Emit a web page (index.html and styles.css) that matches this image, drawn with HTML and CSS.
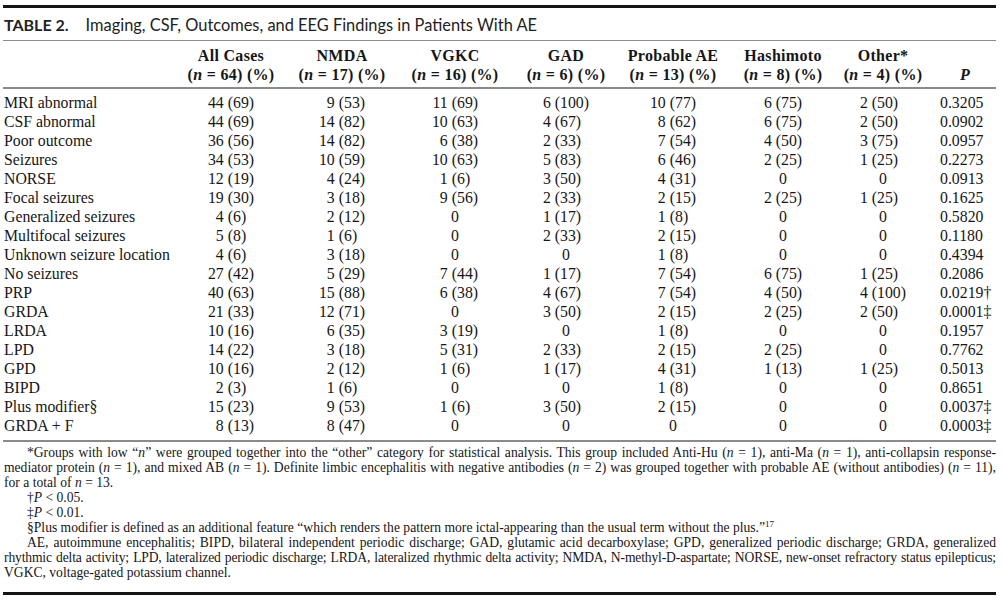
FILE: index.html
```html
<!DOCTYPE html>
<html lang="en">
<head>
<meta charset="utf-8">
<title>Table 2</title>
<link rel="stylesheet" href="styles.css">
</head>
<body>
<div class="sheet">
  <div class="title"><span class="lbl">TABLE 2.</span><span class="cap">Imaging, CSF, Outcomes, and EEG Findings in Patients With AE</span></div>
  <table class="data">
    <colgroup>
      <col class="c-label"><col class="c-all"><col class="c-nmda"><col class="c-vgkc"><col class="c-gad"><col class="c-prob"><col class="c-hash"><col class="c-other"><col class="c-p">
    </colgroup>
    <thead>
      <tr>
        <th></th>
        <th>All Cases<br>(<i>n</i> = 64) (%)</th>
        <th>NMDA<br>(<i>n</i> = 17) (%)</th>
        <th>VGKC<br>(<i>n</i> = 16) (%)</th>
        <th>GAD<br>(<i>n</i> = 6) (%)</th>
        <th>Probable AE<br>(<i>n</i> = 13) (%)</th>
        <th>Hashimoto<br>(<i>n</i> = 8) (%)</th>
        <th>Other*<br>(<i>n</i> = 4) (%)</th>
        <th class="ph"><br><i>P</i></th>
      </tr>
    </thead>
    <tbody>
      <tr><td>MRI abnormal</td><td><span class="n">44</span> <span class="p">(69)</span></td><td><span class="n">9</span> <span class="p">(53)</span></td><td><span class="n">11</span> <span class="p">(69)</span></td><td><span class="n">6</span> <span class="p">(100)</span></td><td><span class="n">10</span> <span class="p">(77)</span></td><td><span class="n">6</span> <span class="p">(75)</span></td><td><span class="n">2</span> <span class="p">(50)</span></td><td>0.3205</td></tr>
      <tr><td>CSF abnormal</td><td><span class="n">44</span> <span class="p">(69)</span></td><td><span class="n">14</span> <span class="p">(82)</span></td><td><span class="n">10</span> <span class="p">(63)</span></td><td><span class="n">4</span> <span class="p">(67)</span></td><td><span class="n">8</span> <span class="p">(62)</span></td><td><span class="n">6</span> <span class="p">(75)</span></td><td><span class="n">2</span> <span class="p">(50)</span></td><td>0.0902</td></tr>
      <tr><td>Poor outcome</td><td><span class="n">36</span> <span class="p">(56)</span></td><td><span class="n">14</span> <span class="p">(82)</span></td><td><span class="n">6</span> <span class="p">(38)</span></td><td><span class="n">2</span> <span class="p">(33)</span></td><td><span class="n">7</span> <span class="p">(54)</span></td><td><span class="n">4</span> <span class="p">(50)</span></td><td><span class="n">3</span> <span class="p">(75)</span></td><td>0.0957</td></tr>
      <tr><td>Seizures</td><td><span class="n">34</span> <span class="p">(53)</span></td><td><span class="n">10</span> <span class="p">(59)</span></td><td><span class="n">10</span> <span class="p">(63)</span></td><td><span class="n">5</span> <span class="p">(83)</span></td><td><span class="n">6</span> <span class="p">(46)</span></td><td><span class="n">2</span> <span class="p">(25)</span></td><td><span class="n">1</span> <span class="p">(25)</span></td><td>0.2273</td></tr>
      <tr><td>NORSE</td><td><span class="n">12</span> <span class="p">(19)</span></td><td><span class="n">4</span> <span class="p">(24)</span></td><td><span class="n">1</span> <span class="p">(6)</span></td><td><span class="n">3</span> <span class="p">(50)</span></td><td><span class="n">4</span> <span class="p">(31)</span></td><td>0</td><td>0</td><td>0.0913</td></tr>
      <tr><td>Focal seizures</td><td><span class="n">19</span> <span class="p">(30)</span></td><td><span class="n">3</span> <span class="p">(18)</span></td><td><span class="n">9</span> <span class="p">(56)</span></td><td><span class="n">2</span> <span class="p">(33)</span></td><td><span class="n">2</span> <span class="p">(15)</span></td><td><span class="n">2</span> <span class="p">(25)</span></td><td><span class="n">1</span> <span class="p">(25)</span></td><td>0.1625</td></tr>
      <tr><td>Generalized seizures</td><td><span class="n">4</span> <span class="p">(6)</span></td><td><span class="n">2</span> <span class="p">(12)</span></td><td>0</td><td><span class="n">1</span> <span class="p">(17)</span></td><td><span class="n">1</span> <span class="p">(8)</span></td><td>0</td><td>0</td><td>0.5820</td></tr>
      <tr><td>Multifocal seizures</td><td><span class="n">5</span> <span class="p">(8)</span></td><td><span class="n">1</span> <span class="p">(6)</span></td><td>0</td><td><span class="n">2</span> <span class="p">(33)</span></td><td><span class="n">2</span> <span class="p">(15)</span></td><td>0</td><td>0</td><td>0.1180</td></tr>
      <tr><td>Unknown seizure location</td><td><span class="n">4</span> <span class="p">(6)</span></td><td><span class="n">3</span> <span class="p">(18)</span></td><td>0</td><td>0</td><td><span class="n">1</span> <span class="p">(8)</span></td><td>0</td><td>0</td><td>0.4394</td></tr>
      <tr><td>No seizures</td><td><span class="n">27</span> <span class="p">(42)</span></td><td><span class="n">5</span> <span class="p">(29)</span></td><td><span class="n">7</span> <span class="p">(44)</span></td><td><span class="n">1</span> <span class="p">(17)</span></td><td><span class="n">7</span> <span class="p">(54)</span></td><td><span class="n">6</span> <span class="p">(75)</span></td><td><span class="n">1</span> <span class="p">(25)</span></td><td>0.2086</td></tr>
      <tr><td>PRP</td><td><span class="n">40</span> <span class="p">(63)</span></td><td><span class="n">15</span> <span class="p">(88)</span></td><td><span class="n">6</span> <span class="p">(38)</span></td><td><span class="n">4</span> <span class="p">(67)</span></td><td><span class="n">7</span> <span class="p">(54)</span></td><td><span class="n">4</span> <span class="p">(50)</span></td><td><span class="n">4</span> <span class="p">(100)</span></td><td>0.0219†</td></tr>
      <tr><td>GRDA</td><td><span class="n">21</span> <span class="p">(33)</span></td><td><span class="n">12</span> <span class="p">(71)</span></td><td>0</td><td><span class="n">3</span> <span class="p">(50)</span></td><td><span class="n">2</span> <span class="p">(15)</span></td><td><span class="n">2</span> <span class="p">(25)</span></td><td><span class="n">2</span> <span class="p">(50)</span></td><td>0.0001‡</td></tr>
      <tr><td>LRDA</td><td><span class="n">10</span> <span class="p">(16)</span></td><td><span class="n">6</span> <span class="p">(35)</span></td><td><span class="n">3</span> <span class="p">(19)</span></td><td>0</td><td><span class="n">1</span> <span class="p">(8)</span></td><td>0</td><td>0</td><td>0.1957</td></tr>
      <tr><td>LPD</td><td><span class="n">14</span> <span class="p">(22)</span></td><td><span class="n">3</span> <span class="p">(18)</span></td><td><span class="n">5</span> <span class="p">(31)</span></td><td><span class="n">2</span> <span class="p">(33)</span></td><td><span class="n">2</span> <span class="p">(15)</span></td><td><span class="n">2</span> <span class="p">(25)</span></td><td>0</td><td>0.7762</td></tr>
      <tr><td>GPD</td><td><span class="n">10</span> <span class="p">(16)</span></td><td><span class="n">2</span> <span class="p">(12)</span></td><td><span class="n">1</span> <span class="p">(6)</span></td><td><span class="n">1</span> <span class="p">(17)</span></td><td><span class="n">4</span> <span class="p">(31)</span></td><td><span class="n">1</span> <span class="p">(13)</span></td><td><span class="n">1</span> <span class="p">(25)</span></td><td>0.5013</td></tr>
      <tr><td>BIPD</td><td><span class="n">2</span> <span class="p">(3)</span></td><td><span class="n">1</span> <span class="p">(6)</span></td><td>0</td><td>0</td><td><span class="n">1</span> <span class="p">(8)</span></td><td>0</td><td>0</td><td>0.8651</td></tr>
      <tr><td>Plus modifier§</td><td><span class="n">15</span> <span class="p">(23)</span></td><td><span class="n">9</span> <span class="p">(53)</span></td><td><span class="n">1</span> <span class="p">(6)</span></td><td><span class="n">3</span> <span class="p">(50)</span></td><td><span class="n">2</span> <span class="p">(15)</span></td><td>0</td><td>0</td><td>0.0037‡</td></tr>
      <tr><td>GRDA + F</td><td><span class="n">8</span> <span class="p">(13)</span></td><td><span class="n">8</span> <span class="p">(47)</span></td><td>0</td><td>0</td><td>0</td><td>0</td><td>0</td><td>0.0003‡</td></tr>
    </tbody>
  </table>
  <div class="notes">
    <p class="para">
      <span class="ln j ind">*Groups with low “<i>n</i>” were grouped together into the “other” category for statistical analysis. This group included Anti-Hu (<i>n</i> = 1), anti-Ma (<i>n</i> = 1), anti-collapsin response-</span>
      <span class="ln j">mediator protein (<i>n</i> = 1), and mixed AB (<i>n</i> = 1). Definite limbic encephalitis with negative antibodies (<i>n</i> = 2) was grouped together with probable AE (without antibodies) (<i>n</i> = 11),</span>
      <span class="ln">for a total of <i>n</i> = 13.</span>
    </p>
    <p class="para"><span class="ln ind">†<i>P</i> &lt; 0.05.</span></p>
    <p class="para"><span class="ln ind">‡<i>P</i> &lt; 0.01.</span></p>
    <p class="para"><span class="ln ind">§Plus modifier is defined as an additional feature “which renders the pattern more ictal-appearing than the usual term without the plus.”<sup>17</sup></span></p>
    <p class="para">
      <span class="ln j ind">AE, autoimmune encephalitis; BIPD, bilateral independent periodic discharge; GAD, glutamic acid decarboxylase; GPD, generalized periodic discharge; GRDA, generalized</span>
      <span class="ln j tight">rhythmic delta activity; LPD, lateralized periodic discharge; LRDA, lateralized rhythmic delta activity; NMDA, N-methyl-D-aspartate; NORSE, new-onset refractory status epilepticus;</span>
      <span class="ln">VGKC, voltage-gated potassium channel.</span>
    </p>
  </div>
  <div class="rule-bot"></div>
</div>
</body>
</html>
```
FILE: styles.css
```css
html, body {
  margin: 0;
  background: #ffffff;
}
body {
  color: #161616;
  font-family: "Liberation Serif", "Times New Roman", serif;
}
.sheet {
  width: 993px;
  margin: 0 0 0 3px;
  padding-top: 5px;
}
.title {
  display: flex;
  align-items: center;
  gap: 17px;
  height: 32px;
  padding-left: 1px;
  border-top: 3px solid #141414;
  border-bottom: 1px solid #8c8c8c;
  font-family: Lato, "Liberation Sans", sans-serif;
  font-size: 16.4px;
  color: #222;
}
.title .lbl {
  font-weight: 700;
  font-size: 16px;
}
.data {
  width: 993px;
  border-collapse: collapse;
  table-layout: fixed;
  font-size: 15.8px;
}
.c-label { width: 172px; }
.c-all { width: 112px; }
.c-nmda { width: 110px; }
.c-vgkc { width: 116px; }
.c-gad { width: 106px; }
.c-prob { width: 108px; }
.c-hash { width: 112px; }
.c-other { width: 88px; }
.c-p { width: 69px; }

.data th {
  font-weight: 700;
  font-size: 16px;
  letter-spacing: 0.3px;
  line-height: 19px;
  padding: 5px 0 3px;
  text-align: center;
  vertical-align: bottom;
  white-space: nowrap;
  border-bottom: 2px solid #8a8a8a;
}
.data th.ph {
  padding-left: 7px;
}
.data td {
  padding: 0;
  line-height: 19px;
  text-align: center;
  white-space: nowrap;
}
.data td:first-child {
  text-align: left;
  padding-left: 1px;
}
.data td:last-child {
  text-align: left;
  padding-left: 13px;
}
.data tbody tr:first-child td {
  padding-top: 4px;
}
.data tbody tr:last-child td {
  padding-bottom: 5px;
}
.n {
  display: inline-block;
  width: 2ch;
  text-align: right;
}
.p {
  display: inline-block;
  width: calc(2ch + 0.666em);
  text-align: left;
}
.data td:nth-child(5) .n,
.data td:nth-child(7) .n,
.data td:nth-child(8) .n {
  width: 1ch;
}
.data td:nth-child(5) .p,
.data td:nth-child(8) .p {
  width: calc(3ch + 0.666em);
}
.notes {
  border-top: 2px solid #8a8a8a;
  padding: 3px 0 12px 1px;
  font-size: 13.6px;
  line-height: 15px;
}
.para {
  margin: 0;
}
.ln {
  display: block;
  white-space: nowrap;
}
.ln.j {
  text-align: justify;
  text-align-last: justify;
  white-space: normal;
}
.ln.tight {
  letter-spacing: -0.15px;
  word-spacing: -1px;
}
.ind {
  text-indent: 23px;
}
.notes sup {
  font-size: 9px;
  line-height: 0;
  vertical-align: 5px;
}
.rule-bot {
  border-top: 3px solid #141414;
}
```
